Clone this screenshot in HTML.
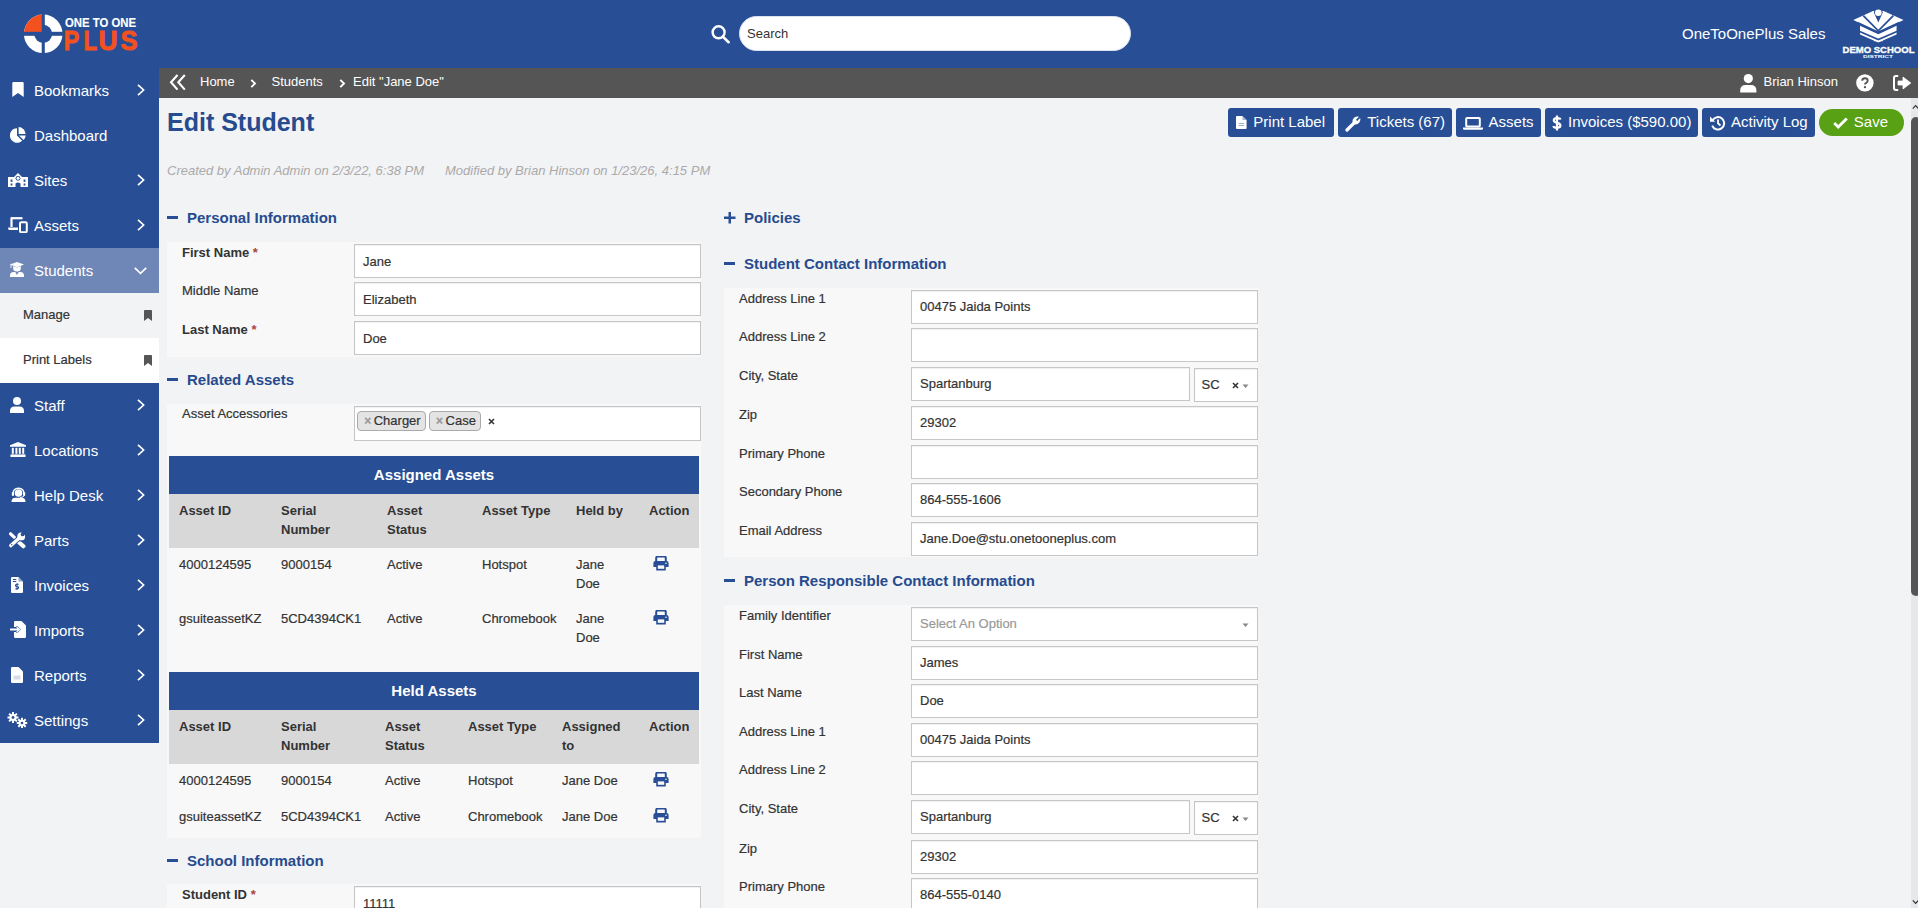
<!DOCTYPE html>
<html><head><meta charset="utf-8">
<style>
*{box-sizing:border-box}
html,body{margin:0;padding:0;width:1918px;height:908px;overflow:hidden}
body{font-family:"Liberation Sans",sans-serif;font-size:13px;color:#333;background:#f2f3f5;position:relative}
.abs{position:absolute}
#hdr{left:0;top:0;width:1918px;height:68px;background:#284f96}
#side{left:0;top:68px;width:159px;height:675px;background:#284f96}
#crumb{left:159px;top:68px;width:1759px;height:30px;background:#555555;color:#fff}
.si{position:absolute;left:0;width:159px;height:45px;color:#fff;font-size:15px}
.si .t{position:absolute;left:34px;top:0;line-height:45px}
.si svg.ic{position:absolute}
.si .chev{position:absolute;left:136px;top:15.5px}
.sub{position:absolute;left:0;width:159px;height:45px;font-size:13px;color:#333}
.sub .t{position:absolute;left:23px;line-height:45px;top:-1px}
.sub svg{position:absolute;left:144px;top:17px}
.btn{position:absolute;top:108px;height:29px;background:#284f96;color:#fff;border-radius:3px;font-size:15px;line-height:29px;white-space:nowrap}
.btn svg{position:absolute}
.btn span{position:absolute;top:-1px}
.sh{position:absolute;font-size:15px;font-weight:bold;color:#264b8e;line-height:17px;white-space:nowrap}
.sh .d{position:absolute;left:0;top:7px;width:11.4px;height:2.8px;background:#284f96}
.sh .tx{position:absolute;left:20px;top:0}
.panel{position:absolute;background:#f8f8f9;width:534px}
.row{position:absolute;left:0;width:534px;height:34px}
.row .lb{position:absolute;left:15px;top:1px;line-height:15px;white-space:nowrap}
.row .lb b{font-weight:bold}
.row .lb .req{color:#a94442;font-weight:bold}
.inp{position:absolute;left:187px;top:0;width:347px;height:34px;background:#fff;border:1px solid #c6c6c6;box-shadow:inset 0 1px 1px rgba(0,0,0,.06)}
.inp .v{position:absolute;left:8px;top:9px;line-height:15px;white-space:nowrap;color:#333}
table.at{position:absolute;border-collapse:collapse;table-layout:fixed;font-size:13px}
table.at th.cap{background:#284f96;color:#fff;font-size:15px;height:38px;text-align:center;font-weight:bold;padding:0}
table.at thead tr.h th{background:#d8d8d8;font-weight:bold;text-align:left;vertical-align:top;padding:8px 10px;line-height:18.57px;color:#333;border-bottom:1px solid #d8d8d8}
table.at td{vertical-align:top;padding:8px 10px;line-height:18.57px;color:#333;border-bottom:1px solid #f8f8f9}
.chip{position:absolute;top:3.6px;height:20px;line-height:18px;padding:0 4px 0 6px;background:#e4e4e4;border:1px solid #aaa;border-radius:4px;font-size:13px;color:#333;white-space:nowrap}
.chip i{font-style:normal;color:#999;font-size:12px;font-weight:bold;margin-right:2.5px}
.pr .inp .v{top:8px}
body{-webkit-text-stroke:0.2px currentColor}
b,th,.sh,.req,.abs[style*="font-weight:bold"],.si,#crumb,.btn,#hdr{-webkit-text-stroke:0}
</style></head><body>

<div id="hdr" class="abs">
<svg class="abs" style="left:0;top:0" width="160" height="68" viewBox="0 0 160 68">
  <defs><mask id="lm"><rect x="0" y="0" width="160" height="68" fill="#fff"/><rect x="41.7" y="0" width="3.1" height="68" fill="#000"/><rect x="0" y="31.8" width="80" height="4" fill="#000"/></mask></defs>
 <g mask="url(#lm)">
  <circle cx="43.2" cy="33.8" r="19.3" fill="#fff"/>
  <circle cx="43.2" cy="33.8" r="9" fill="#284f96"/>
  <path d="M43.2 33.8 L23.9 33.8 A19.3 19.3 0 0 1 43.2 14.5 Z" fill="#f4511e"/>
 </g>
<text x="65" y="27.2" font-family="Liberation Sans" font-weight="bold" font-size="12.6" fill="#fff" stroke="#fff" stroke-width="0.15" textLength="71" lengthAdjust="spacingAndGlyphs">ONE TO ONE</text>
 <g font-family="Liberation Sans" font-weight="bold" font-size="27" fill="#f4511e" stroke="#f4511e" stroke-width="0.9"><text x="63.8" y="50" textLength="15.5" lengthAdjust="spacingAndGlyphs">P</text><text x="83.6" y="50" textLength="13.5" lengthAdjust="spacingAndGlyphs">L</text><text x="98.6" y="50" textLength="19" lengthAdjust="spacingAndGlyphs">U</text><text x="120.6" y="50" textLength="17" lengthAdjust="spacingAndGlyphs">S</text></g>
</svg>
<svg class="abs" style="left:710px;top:24px" width="22" height="20" viewBox="0 0 22 20">
 <circle cx="8.6" cy="8.3" r="6" fill="none" stroke="#fff" stroke-width="2.4"/>
 <line x1="12.8" y1="12.6" x2="18.6" y2="18.2" stroke="#fff" stroke-width="2.6" stroke-linecap="round"/>
</svg>
<div class="abs" style="left:739px;top:16px;width:392px;height:35px;background:#fff;border-radius:17.5px;border:1px solid #dde3ee"></div>
<div class="abs" style="left:747px;top:26px;line-height:15px;font-size:13px;color:#333">Search</div>
<div class="abs" style="left:1682px;top:25px;line-height:17px;font-size:15px;color:#fff;white-space:nowrap">OneToOnePlus Sales</div>
<svg class="abs" style="left:1848px;top:4px" width="62" height="42" viewBox="0 0 1340 908">
 <g fill="#fff">
  <path d="M115 345 L540 150 L770 150 L1200 345 L655 610 Z"/>
  <path d="M260 470 L655 655 L1050 470 L1050 660 L655 830 L260 660 Z"/>
  <rect x="560" y="770" width="190" height="35"/>
 </g>
 <g fill="none" stroke="#284f96" stroke-width="38">
  <path d="M330 250 L655 580 L980 250"/>
  <path d="M200 400 L655 610 L1110 400"/>
  <path d="M240 590 L655 770 L1070 590"/>
 </g>
 <path d="M560 190 A95 95 0 1 1 750 190 L655 400 Z" fill="#284f96"/>
 <circle cx="655" cy="190" r="72" fill="#fff"/>
</svg>
<svg class="abs" style="left:1838px;top:4px" width="80" height="58" viewBox="0 0 80 58">
 <text x="4.5" y="49.3" font-family="Liberation Sans" font-weight="bold" font-size="8.6" fill="#fff" stroke="#fff" stroke-width="0.3" textLength="72" lengthAdjust="spacingAndGlyphs">DEMO SCHOOL</text>
 <text x="25" y="53.6" font-family="Liberation Sans" font-weight="bold" font-size="4.2" fill="#fff" textLength="30" lengthAdjust="spacingAndGlyphs">DISTRICT</text>
</svg>
</div>
<div id="side" class="abs">
<div class="si" style="top:0px;"><svg class="ic" style="left:11.5px;top:14px" width="12" height="15" viewBox="0 0 12 15"><path d="M0.3 1.2 Q0.3 0 1.5 0 L10.5 0 Q11.7 0 11.7 1.2 L11.7 15 L6 11 L0.3 15 Z" fill="#fff"/></svg><span class="t">Bookmarks</span><svg class="chev" width="10" height="12" viewBox="0 0 10 12"><path d="M2 0.8 L7.6 6 L2 11.2" fill="none" stroke="#fff" stroke-width="1.7"/></svg></div>
<div class="si" style="top:45px;"><svg class="ic" style="left:10px;top:13.5px" width="16" height="16" viewBox="0 0 16 16"><path d="M7 1.2 L7 8.6 L12.2 13.8 A7.3 7.3 0 1 1 7 1.2 Z" fill="#fff"/><path d="M8.6 0 A7.3 7.3 0 0 1 15.6 7 L8.6 7 Z" fill="#fff"/><path d="M9 8.6 L15.8 8.6 A7.3 7.3 0 0 1 13.6 12.9 Z" fill="#fff"/></svg><span class="t">Dashboard</span></div>
<div class="si" style="top:90px;"><svg class="ic" style="left:8px;top:14px" width="20" height="16" viewBox="0 0 20 16"><path d="M0 5 L6 5 L10 1 L14 5 L20 5 L20 15 L12.5 15 L12.5 11.5 Q10 9.5 7.5 11.5 L7.5 15 L0 15 Z" fill="#fff"/><circle cx="10" cy="6.3" r="2.4" fill="#284f96"/><circle cx="10" cy="6.3" r="1.5" fill="#fff"/><rect x="2.6" y="7.5" width="1.8" height="2.4" fill="#284f96"/><rect x="15.6" y="7.5" width="1.8" height="2.4" fill="#284f96"/><rect x="2.6" y="11.5" width="1.8" height="2" fill="#284f96"/><rect x="15.6" y="11.5" width="1.8" height="2" fill="#284f96"/></svg><span class="t">Sites</span><svg class="chev" width="10" height="12" viewBox="0 0 10 12"><path d="M2 0.8 L7.6 6 L2 11.2" fill="none" stroke="#fff" stroke-width="1.7"/></svg></div>
<div class="si" style="top:135px;"><svg class="ic" style="left:8px;top:14px" width="20" height="16" viewBox="0 0 20 16"><path d="M3 1.2 L14.5 1.2" stroke="#fff" stroke-width="2.2" fill="none"/><path d="M3.5 0.5 L3.5 10" stroke="#fff" stroke-width="2.2"/><path d="M0.2 10.5 L10 10.5 L10 13 L1.5 13 Q0.2 13 0.2 11.7 Z" fill="#fff"/><rect x="12" y="5.2" width="6.8" height="10" rx="1.2" fill="none" stroke="#fff" stroke-width="2"/></svg><span class="t">Assets</span><svg class="chev" width="10" height="12" viewBox="0 0 10 12"><path d="M2 0.8 L7.6 6 L2 11.2" fill="none" stroke="#fff" stroke-width="1.7"/></svg></div>
<div class="si" style="top:180px;background:#6f87b7"><svg class="ic" style="left:10.4px;top:14px" width="14" height="15" viewBox="0 0 14 15"><path d="M7 0 L14 2.6 L7 5.2 L0 2.6 Z" fill="#fff"/><path d="M3.2 4 L3.2 6.2 Q3.2 9.4 7 9.4 Q10.8 9.4 10.8 6.2 L10.8 4 L7 5.5 Z" fill="#fff"/><path d="M1 1.8 L1 6" stroke="#fff" stroke-width="0.9"/><path d="M0 15 L0 13.6 Q0 10 3.6 10 L5.2 10 L7 13 L8.8 10 L10.4 10 Q14 10 14 13.6 L14 15 Z" fill="#fff"/></svg><span class="t">Students</span><svg class="chev" style="left:133.5px;top:17.5px" width="13" height="9" viewBox="0 0 13 9"><path d="M0.8 1.8 L6.5 7.4 L12.2 1.8" fill="none" stroke="#fff" stroke-width="1.7"/></svg></div>
<div class="sub" style="top:225px;background:#f2f3f5"><span class="t">Manage</span><svg width="8" height="11" viewBox="0 0 8 11"><path d="M0 0.8 Q0 0 0.8 0 L7.2 0 Q8 0 8 0.8 L8 11 L4 8 L0 11 Z" fill="#555"/></svg></div>
<div class="sub" style="top:270px;background:#fff"><span class="t">Print Labels</span><svg width="8" height="11" viewBox="0 0 8 11"><path d="M0 0.8 Q0 0 0.8 0 L7.2 0 Q8 0 8 0.8 L8 11 L4 8 L0 11 Z" fill="#555"/></svg></div>
<div class="si" style="top:315px;"><svg class="ic" style="left:10.4px;top:13.5px" width="14" height="16" viewBox="0 0 14 16"><circle cx="7" cy="4" r="4" fill="#fff"/><path d="M0 16 L0 14 Q0 9.5 4.5 9.5 L9.5 9.5 Q14 9.5 14 14 L14 16 Z" fill="#fff"/></svg><span class="t">Staff</span><svg class="chev" width="10" height="12" viewBox="0 0 10 12"><path d="M2 0.8 L7.6 6 L2 11.2" fill="none" stroke="#fff" stroke-width="1.7"/></svg></div>
<div class="si" style="top:360px;"><svg class="ic" style="left:9.7px;top:14px" width="16" height="15" viewBox="0 0 16 15"><path d="M8 0 L16 3.2 L16 4.8 L0 4.8 L0 3.2 Z" fill="#fff"/><rect x="1.8" y="5.8" width="2" height="6" fill="#fff"/><rect x="5.4" y="5.8" width="2" height="6" fill="#fff"/><rect x="8.8" y="5.8" width="2" height="6" fill="#fff"/><rect x="12.2" y="5.8" width="2" height="6" fill="#fff"/><rect x="0.5" y="12.4" width="15" height="2.6" fill="#fff"/></svg><span class="t">Locations</span><svg class="chev" width="10" height="12" viewBox="0 0 10 12"><path d="M2 0.8 L7.6 6 L2 11.2" fill="none" stroke="#fff" stroke-width="1.7"/></svg></div>
<div class="si" style="top:405px;"><svg class="ic" style="left:10.6px;top:14px" width="15" height="15" viewBox="0 0 15 15"><path d="M2 7 Q2 1.2 7.5 1.2 Q13 1.2 13 7" fill="none" stroke="#fff" stroke-width="1.4"/><circle cx="7.5" cy="6" r="3.8" fill="#fff"/><rect x="0.8" y="5" width="2.2" height="4" rx="1" fill="#fff"/><rect x="12" y="5" width="2.2" height="4" rx="1" fill="#fff"/><path d="M13 8.5 Q13 10.5 9 10.5" stroke="#fff" stroke-width="1" fill="none"/><path d="M0.5 15 Q0.5 10.8 4.5 10.8 L10.5 10.8 Q14.5 10.8 14.5 15 Z" fill="#fff"/></svg><span class="t">Help Desk</span><svg class="chev" width="10" height="12" viewBox="0 0 10 12"><path d="M2 0.8 L7.6 6 L2 11.2" fill="none" stroke="#fff" stroke-width="1.7"/></svg></div>
<div class="si" style="top:450px;"><svg class="ic" style="left:9.4px;top:13.5px" width="17" height="17" viewBox="0 0 17 17"><path d="M1.6 1.8 L6.4 6.4" stroke="#fff" stroke-width="3.2" stroke-linecap="round"/><path d="M8.8 9.2 L14.4 14.2" stroke="#fff" stroke-width="4.2" stroke-linecap="round"/><path d="M1.9 13.6 L10.8 5.4" stroke="#284f96" stroke-width="5.2" stroke-linecap="round"/><circle cx="12.2" cy="4.2" r="5.2" fill="#284f96"/><path d="M1.9 13.6 L10.8 5.4" stroke="#fff" stroke-width="3.4" stroke-linecap="round"/><circle cx="12.2" cy="4.4" r="3.9" fill="#fff"/><circle cx="13.6" cy="2.4" r="1.9" fill="#284f96"/><path d="M12.2 0 L17 0 L17 4 Z" fill="#284f96"/><circle cx="2.8" cy="12.8" r="0.7" fill="#284f96"/></svg><span class="t">Parts</span><svg class="chev" width="10" height="12" viewBox="0 0 10 12"><path d="M2 0.8 L7.6 6 L2 11.2" fill="none" stroke="#fff" stroke-width="1.7"/></svg></div>
<div class="si" style="top:495px;"><svg class="ic" style="left:11.4px;top:13.5px" width="12" height="16" viewBox="0 0 12 16"><path d="M0 1.2 Q0 0 1.2 0 L7.5 0 L12 4.5 L12 14.8 Q12 16 10.8 16 L1.2 16 Q0 16 0 14.8 Z" fill="#fff"/><path d="M7.5 0 L7.5 4.5 L12 4.5" fill="#284f96" opacity="0.5"/><rect x="1.8" y="2" width="3.5" height="1" fill="#284f96"/><rect x="1.8" y="4" width="3.5" height="1" fill="#284f96"/><path d="M7.7 7.2 L5.6 7.2 Q4.5 7.2 4.5 8.4 Q4.5 9.5 5.8 9.5 L6.4 9.5 Q7.6 9.5 7.6 10.6 Q7.6 11.8 6.4 11.8 L4.3 11.8 M6 6.2 L6 13" stroke="#284f96" stroke-width="1.1" fill="none"/></svg><span class="t">Invoices</span><svg class="chev" width="10" height="12" viewBox="0 0 10 12"><path d="M2 0.8 L7.6 6 L2 11.2" fill="none" stroke="#fff" stroke-width="1.7"/></svg></div>
<div class="si" style="top:540px;"><svg class="ic" style="left:10px;top:13px" width="16" height="17" viewBox="0 0 16 17"><path d="M4 1.2 Q4 0 5.2 0 L11.5 0 L16 4.5 L16 15.8 Q16 17 14.8 17 L5.2 17 Q4 17 4 15.8 L4 11 L6 11 L6 6 L4 6 Z" fill="#fff"/><path d="M0 8.5 L9 8.5" stroke="#284f96" stroke-width="3.4"/><path d="M0 8.5 L9 8.5" stroke="#fff" stroke-width="1.6"/><path d="M6.5 5.5 L10 8.5 L6.5 11.5" stroke="#284f96" stroke-width="1.5" fill="none"/><path d="M6 5.8 L9.2 8.5 L6 11.2 Z" fill="#284f96"/><path d="M0 8.5 L8 8.5" stroke="#fff" stroke-width="1.6"/><path d="M6.6 6.3 L9.5 8.5 L6.6 10.7" stroke="#fff" stroke-width="1.6" fill="none"/></svg><span class="t">Imports</span><svg class="chev" width="10" height="12" viewBox="0 0 10 12"><path d="M2 0.8 L7.6 6 L2 11.2" fill="none" stroke="#fff" stroke-width="1.7"/></svg></div>
<div class="si" style="top:585px;"><svg class="ic" style="left:11.4px;top:13.5px" width="12" height="16" viewBox="0 0 12 16"><path d="M0 1.2 Q0 0 1.2 0 L7.5 0 L12 4.5 L12 14.8 Q12 16 10.8 16 L1.2 16 Q0 16 0 14.8 Z" fill="#fff"/><rect x="2.5" y="8.5" width="7" height="4" fill="#d5dbe8"/></svg><span class="t">Reports</span><svg class="chev" width="10" height="12" viewBox="0 0 10 12"><path d="M2 0.8 L7.6 6 L2 11.2" fill="none" stroke="#fff" stroke-width="1.7"/></svg></div>
<div class="si" style="top:630px;"><svg class="ic" style="left:7px;top:13.5px" width="21" height="16" viewBox="0 0 21 16"><g fill="#fff"><circle cx="6" cy="5.5" r="3.6"/><rect x="5" y="0" width="2" height="11"/><rect x="0.5" y="4.5" width="11" height="2"/><rect x="5" y="0" width="2" height="11" transform="rotate(45 6 5.5)"/><rect x="5" y="0" width="2" height="11" transform="rotate(-45 6 5.5)"/><circle cx="15" cy="11" r="3.3"/><rect x="14" y="5.8" width="2" height="10.4"/><rect x="9.8" y="10" width="10.4" height="2"/><rect x="14" y="5.8" width="2" height="10.4" transform="rotate(45 15 11)"/><rect x="14" y="5.8" width="2" height="10.4" transform="rotate(-45 15 11)"/></g><circle cx="6" cy="5.5" r="1.4" fill="#284f96"/><circle cx="15" cy="11" r="1.3" fill="#284f96"/></svg><span class="t">Settings</span><svg class="chev" width="10" height="12" viewBox="0 0 10 12"><path d="M2 0.8 L7.6 6 L2 11.2" fill="none" stroke="#fff" stroke-width="1.7"/></svg></div>
</div>
<div id="crumb" class="abs">
<svg class="abs" style="left:10px;top:6px" width="18" height="17" viewBox="0 0 18 17"><path d="M8.5 1 L2 8.3 L8.5 15.6 M15.8 1 L9.3 8.3 L15.8 15.6" fill="none" stroke="#fff" stroke-width="2.1"/></svg>
<span class="abs" style="left:41px;top:6px;line-height:15px;font-size:13px">Home</span>
<svg class="abs" style="left:90.5px;top:10.5px" width="7" height="9" viewBox="0 0 7 9"><path d="M1.3 0.8 L5 4.5 L1.3 8.2" fill="none" stroke="#fff" stroke-width="1.9"/></svg>
<span class="abs" style="left:112.5px;top:6px;line-height:15px;font-size:13px">Students</span>
<svg class="abs" style="left:179.5px;top:10.5px" width="7" height="9" viewBox="0 0 7 9"><path d="M1.3 0.8 L5 4.5 L1.3 8.2" fill="none" stroke="#fff" stroke-width="1.9"/></svg>
<span class="abs" style="left:194px;top:6px;line-height:15px;font-size:13px">Edit "Jane Doe"</span>
<svg class="abs" style="left:1581px;top:5.5px" width="17" height="19" viewBox="0 0 17 19"><circle cx="8.3" cy="4.6" r="4.6" fill="#fff"/><path d="M0.2 18.5 L0.2 16.5 Q0.2 11 5.7 11 L10.9 11 Q16.4 11 16.4 16.5 L16.4 18.5 Z" fill="#fff"/></svg>
<span class="abs" style="left:1604.5px;top:6px;line-height:15px;font-size:13px;white-space:nowrap">Brian Hinson</span>
<svg class="abs" style="left:1696.5px;top:6px" width="18" height="18" viewBox="0 0 18 18"><circle cx="8.9" cy="8.9" r="8.7" fill="#fff"/><path d="M6.2 6.8 Q6.2 4.2 8.9 4.2 Q11.7 4.2 11.7 6.6 Q11.7 8 10.2 8.8 Q9 9.4 9 10.6" fill="none" stroke="#555" stroke-width="1.9"/><circle cx="9" cy="13.2" r="1.15" fill="#555"/></svg>
<svg class="abs" style="left:1733.5px;top:7px" width="19" height="16" viewBox="0 0 19 16"><path d="M5.2 1 L3 1 Q1 1 1 3 L1 13 Q1 15 3 15 L5.2 15" fill="none" stroke="#fff" stroke-width="2"/><path d="M5 6 L10 6 L10 2 L17.8 8 L10 14 L10 10 L5 10 Z" fill="#fff" stroke="#fff" stroke-width="0.8" stroke-linejoin="round"/></svg>
</div>

<div class="abs" style="left:167px;top:107.3px;font-size:25px;font-weight:bold;color:#264b8e;line-height:30px;white-space:nowrap">Edit Student</div>
<div class="btn" style="left:1228px;width:106px"><svg style="left:8px;top:8.3px" width="11" height="13" viewBox="0 0 11 13"><path d="M0 1 Q0 0 1 0 L6.5 0 L10.6 4.1 L10.6 12 Q10.6 13 9.6 13 L1 13 Q0 13 0 12 Z" fill="#fff"/><path d="M6.5 0 L6.5 4.1 L10.6 4.1" fill="#284f96" opacity=".4"/><rect x="2.5" y="7" width="5.6" height="1" fill="#284f96" opacity=".45"/><rect x="2.5" y="9" width="5.6" height="1" fill="#284f96" opacity=".45"/></svg><span style="left:25.3px">Print Label</span></div>
<div class="btn" style="left:1338px;width:114px"><svg style="left:7px;top:7.5px" width="16" height="16" viewBox="0 0 16 16"><path d="M2 14 L8.6 7.4" stroke="#fff" stroke-width="3.2" stroke-linecap="round"/><path d="M8 8 Q6.5 4 9.4 1.6 Q11.5 0 14 0.8 L11 3.8 L12.2 5 L15.2 2 Q16 4.5 14.4 6.6 Q12 9.5 8 8 Z" fill="#fff"/></svg><span style="left:29.2px">Tickets (67)</span></div>
<div class="btn" style="left:1456px;width:85px"><svg style="left:7px;top:8.5px" width="20" height="13" viewBox="0 0 20 13"><rect x="3.2" y="1" width="13.6" height="8.6" rx="0.8" fill="none" stroke="#fff" stroke-width="2"/><path d="M0 10.6 L20 10.6 L20 11.6 Q20 12.8 18.8 12.8 L1.2 12.8 Q0 12.8 0 11.6 Z" fill="#fff"/></svg><span style="left:32.6px">Assets</span></div>
<div class="btn" style="left:1545px;width:153px"><svg style="left:6.5px;top:7px" width="10" height="16" viewBox="0 0 10 16"><path d="M8.3 4.6 Q8.2 3.2 5 3.2 Q1.8 3.2 1.8 5.3 Q1.8 7.2 5 7.8 Q8.4 8.4 8.4 10.6 Q8.4 12.8 5 12.8 Q1.6 12.8 1.5 11" fill="none" stroke="#fff" stroke-width="2.2"/><path d="M5 0.5 L5 15.5" stroke="#fff" stroke-width="2.2"/></svg><span style="left:23px">Invoices ($590.00)</span></div>
<div class="btn" style="left:1702px;width:113px"><svg style="left:6.5px;top:7px" width="17" height="16" viewBox="0 0 17 16"><path d="M3.6 5.2 A6.2 6.2 0 1 1 3.2 10.6" fill="none" stroke="#fff" stroke-width="2"/><path d="M1 1.6 L1 6.8 L6.2 6.8 Z" fill="#fff"/><path d="M9 4.5 L9 8.3 L11.5 10.5" fill="none" stroke="#fff" stroke-width="1.8"/></svg><span style="left:29px">Activity Log</span></div>
<div class="btn" style="left:1819px;top:109px;width:85px;height:27px;border-radius:13.5px;background:#58a014"><svg style="left:13.5px;top:7.5px" width="15" height="12" viewBox="0 0 15 12"><path d="M1.2 6 L5.2 10 L13.8 1.4" fill="none" stroke="#fff" stroke-width="2.8"/></svg><span style="left:34.8px;top:-2px">Save</span></div>

<div class="abs" style="left:167px;top:163px;font-size:13px;font-style:italic;color:#aaaaaa;line-height:15px;white-space:nowrap;-webkit-text-stroke:0">Created by Admin Admin on 2/3/22, 6:38 PM</div>
<div class="abs" style="left:445px;top:163px;font-size:13px;font-style:italic;color:#aaaaaa;line-height:15px;white-space:nowrap;-webkit-text-stroke:0">Modified by Brian Hinson on 1/23/26, 4:15 PM</div>

<!--FORM-->
<div class="sh" style="left:167px;top:209.3px"><span class="d"></span><span class="tx">Personal Information</span></div>
<div class="panel" style="left:167px;top:242px;height:115px">
<div class="row" style="top:2.00px"><span class="lb"><b>First Name</b> <span class="req">*</span></span><div class="inp" style=""><span class="v" style="color:#333">Jane</span></div></div>
<div class="row" style="top:40.00px"><span class="lb">Middle Name</span><div class="inp" style=""><span class="v" style="color:#333">Elizabeth</span></div></div>
<div class="row" style="top:79.00px"><span class="lb"><b>Last Name</b> <span class="req">*</span></span><div class="inp" style=""><span class="v" style="color:#333">Doe</span></div></div>
</div>
<div class="sh" style="left:167px;top:371px"><span class="d"></span><span class="tx">Related Assets</span></div>
<div class="panel" style="left:167px;top:403.6px;height:434px">
<div class="row" style="top:2.7px"><span class="lb" style="top:-0.5px">Asset Accessories</span><div class="inp" style="height:34.3px"><span class="chip" style="left:2.2px"><i>×</i>Charger</span><span class="chip" style="left:74.1px"><i>×</i>Case</span><svg style="position:absolute;left:132.5px;top:10.5px" width="8" height="8" viewBox="0 0 8 8"><path d="M1 1 L6 6 M6 1 L1 6" stroke="#333" stroke-width="1.6"/></svg></div></div>
<table class="at" style="left:2px;top:52.4px;width:530px"><colgroup><col style="width:102px"><col style="width:106px"><col style="width:95px"><col style="width:94px"><col style="width:73px"><col style="width:60px"></colgroup><thead><tr><th class="cap" colspan="6">Assigned Assets</th></tr><tr class="h"><th>Asset ID</th><th>Serial Number</th><th>Asset Status</th><th>Asset Type</th><th>Held by</th><th>Action</th></tr></thead><tbody><tr><td>4000124595</td><td>9000154</td><td>Active</td><td>Hotspot</td><td>Jane Doe</td><td style="padding-top:8px;padding-left:14px"><svg style="display:block" width="16" height="15" viewBox="0 0 16 15"><path d="M3.2 5 L3.2 2 Q3.2 0.6 4.6 0.6 L11.4 0.6 Q12.8 0.6 12.8 2 L12.8 5" fill="none" stroke="#284f96" stroke-width="2"/><path d="M0.4 7 Q0.4 5 2.4 5 L13.6 5 Q15.6 5 15.6 7 L15.6 11 L12.8 11 L12.8 14.4 L3.2 14.4 L3.2 11 L0.4 11 Z" fill="#284f96"/><rect x="4.8" y="9.4" width="6.4" height="3.4" fill="#f8f8f9"/><circle cx="13" cy="7.3" r="0.8" fill="#f8f8f9"/></svg></td></tr><tr><td>gsuiteassetKZ</td><td>5CD4394CK1</td><td>Active</td><td>Chromebook</td><td>Jane Doe</td><td style="padding-top:8px;padding-left:14px"><svg style="display:block" width="16" height="15" viewBox="0 0 16 15"><path d="M3.2 5 L3.2 2 Q3.2 0.6 4.6 0.6 L11.4 0.6 Q12.8 0.6 12.8 2 L12.8 5" fill="none" stroke="#284f96" stroke-width="2"/><path d="M0.4 7 Q0.4 5 2.4 5 L13.6 5 Q15.6 5 15.6 7 L15.6 11 L12.8 11 L12.8 14.4 L3.2 14.4 L3.2 11 L0.4 11 Z" fill="#284f96"/><rect x="4.8" y="9.4" width="6.4" height="3.4" fill="#f8f8f9"/><circle cx="13" cy="7.3" r="0.8" fill="#f8f8f9"/></svg></td></tr></tbody></table>
<table class="at" style="left:2px;top:268.4px;width:530px"><colgroup><col style="width:102px"><col style="width:104px"><col style="width:83px"><col style="width:94px"><col style="width:87px"><col style="width:60px"></colgroup><thead><tr><th class="cap" colspan="6">Held Assets</th></tr><tr class="h"><th>Asset ID</th><th>Serial Number</th><th>Asset Status</th><th>Asset Type</th><th>Assigned to</th><th>Action</th></tr></thead><tbody><tr><td>4000124595</td><td>9000154</td><td>Active</td><td>Hotspot</td><td>Jane Doe</td><td style="padding-top:8px;padding-left:14px"><svg style="display:block" width="16" height="15" viewBox="0 0 16 15"><path d="M3.2 5 L3.2 2 Q3.2 0.6 4.6 0.6 L11.4 0.6 Q12.8 0.6 12.8 2 L12.8 5" fill="none" stroke="#284f96" stroke-width="2"/><path d="M0.4 7 Q0.4 5 2.4 5 L13.6 5 Q15.6 5 15.6 7 L15.6 11 L12.8 11 L12.8 14.4 L3.2 14.4 L3.2 11 L0.4 11 Z" fill="#284f96"/><rect x="4.8" y="9.4" width="6.4" height="3.4" fill="#f8f8f9"/><circle cx="13" cy="7.3" r="0.8" fill="#f8f8f9"/></svg></td></tr><tr><td>gsuiteassetKZ</td><td>5CD4394CK1</td><td>Active</td><td>Chromebook</td><td>Jane Doe</td><td style="padding-top:8px;padding-left:14px"><svg style="display:block" width="16" height="15" viewBox="0 0 16 15"><path d="M3.2 5 L3.2 2 Q3.2 0.6 4.6 0.6 L11.4 0.6 Q12.8 0.6 12.8 2 L12.8 5" fill="none" stroke="#284f96" stroke-width="2"/><path d="M0.4 7 Q0.4 5 2.4 5 L13.6 5 Q15.6 5 15.6 7 L15.6 11 L12.8 11 L12.8 14.4 L3.2 14.4 L3.2 11 L0.4 11 Z" fill="#284f96"/><rect x="4.8" y="9.4" width="6.4" height="3.4" fill="#f8f8f9"/><circle cx="13" cy="7.3" r="0.8" fill="#f8f8f9"/></svg></td></tr></tbody></table>
</div>
<div class="sh" style="left:167px;top:852.3px"><span class="d"></span><span class="tx">School Information</span></div>
<div class="panel" style="left:167px;top:883.5px;height:40px">
<div class="row" style="top:2.50px"><span class="lb"><b>Student ID</b> <span class="req">*</span></span><div class="inp" style=""><span class="v" style="color:#333">11111</span></div></div>
</div>
<div class="sh" style="left:724px;top:208.8px"><svg style="position:absolute;left:0;top:3.3px" width="11.5" height="11.5" viewBox="0 0 11.5 11.5"><path d="M5.75 0 L5.75 11.5 M0 5.75 L11.5 5.75" stroke="#284f96" stroke-width="2.5"/></svg><span class="tx">Policies</span></div>
<div class="sh" style="left:724px;top:255.2px"><span class="d"></span><span class="tx">Student Contact Information</span></div>
<div class="panel pr" style="left:724px;top:288px;height:269px">
<div class="row" style="top:2.00px"><span class="lb">Address Line 1</span><div class="inp" style=""><span class="v" style="color:#333">00475 Jaida Points</span></div></div>
<div class="row" style="top:40.00px"><span class="lb">Address Line 2</span><div class="inp" style=""></div></div>
<div class="row" style="top:79.00px"><span class="lb">City, State</span><div class="inp" style="width:279px"><span class="v">Spartanburg</span></div><div class="inp" style="left:469.5px;width:64.5px;top:1px"><span class="v" style="left:7px">SC</span><svg style="position:absolute;left:37.5px;top:12.5px" width="8" height="8" viewBox="0 0 8 8"><path d="M1 1 L6 6 M6 1 L1 6" stroke="#333" stroke-width="1.6"/></svg><svg style="position:absolute;left:47.5px;top:14.5px" width="7" height="5" viewBox="0 0 7 5"><path d="M0.5 0.5 L6.5 0.5 L3.5 4 Z" fill="#888"/></svg></div></div>
<div class="row" style="top:118.00px"><span class="lb">Zip</span><div class="inp" style=""><span class="v" style="color:#333">29302</span></div></div>
<div class="row" style="top:157.00px"><span class="lb">Primary Phone</span><div class="inp" style=""></div></div>
<div class="row" style="top:195.00px"><span class="lb">Secondary Phone</span><div class="inp" style=""><span class="v" style="color:#333">864-555-1606</span></div></div>
<div class="row" style="top:234.00px"><span class="lb">Email Address</span><div class="inp" style=""><span class="v" style="color:#333">Jane.Doe@stu.onetooneplus.com</span></div></div>
</div>
<div class="sh" style="left:724px;top:572.3px"><span class="d"></span><span class="tx">Person Responsible Contact Information</span></div>
<div class="panel pr" style="left:724px;top:605px;height:310px">
<div class="row" style="top:2.00px"><span class="lb">Family Identifier</span><div class="inp"><span class="v" style="color:#999">Select An Option</span><svg style="position:absolute;left:330px;top:15px" width="7" height="5" viewBox="0 0 7 5"><path d="M0.5 0.5 L6.5 0.5 L3.5 4 Z" fill="#888"/></svg></div></div>
<div class="row" style="top:41.00px"><span class="lb">First Name</span><div class="inp" style=""><span class="v" style="color:#333">James</span></div></div>
<div class="row" style="top:79.00px"><span class="lb">Last Name</span><div class="inp" style=""><span class="v" style="color:#333">Doe</span></div></div>
<div class="row" style="top:118.00px"><span class="lb">Address Line 1</span><div class="inp" style=""><span class="v" style="color:#333">00475 Jaida Points</span></div></div>
<div class="row" style="top:156.00px"><span class="lb">Address Line 2</span><div class="inp" style=""></div></div>
<div class="row" style="top:195.00px"><span class="lb">City, State</span><div class="inp" style="width:279px"><span class="v">Spartanburg</span></div><div class="inp" style="left:469.5px;width:64.5px;top:1px"><span class="v" style="left:7px">SC</span><svg style="position:absolute;left:37.5px;top:12.5px" width="8" height="8" viewBox="0 0 8 8"><path d="M1 1 L6 6 M6 1 L1 6" stroke="#333" stroke-width="1.6"/></svg><svg style="position:absolute;left:47.5px;top:14.5px" width="7" height="5" viewBox="0 0 7 5"><path d="M0.5 0.5 L6.5 0.5 L3.5 4 Z" fill="#888"/></svg></div></div>
<div class="row" style="top:235.00px"><span class="lb">Zip</span><div class="inp" style=""><span class="v" style="color:#333">29302</span></div></div>
<div class="row" style="top:273.00px"><span class="lb">Primary Phone</span><div class="inp" style=""><span class="v" style="color:#333">864-555-0140</span></div></div>
</div>
<!--/FORM-->
<div class="abs" style="left:1911px;top:98px;width:7px;height:810px;background:#e6e7eb"></div>
<div class="abs" style="left:1911px;top:117px;width:10px;height:478.5px;background:#555;border-radius:5px"></div>
<svg class="abs" style="left:1912px;top:104px" width="6" height="6" viewBox="0 0 6 6"><path d="M0.8 4.6 L3.6 1.6 L6.4 4.6" fill="none" stroke="#333" stroke-width="1.2"/></svg>
<svg class="abs" style="left:1912px;top:899px" width="6" height="6" viewBox="0 0 6 6"><path d="M0.8 1.4 L3.6 4.4 L6.4 1.4" fill="none" stroke="#333" stroke-width="1.2"/></svg>
</body></html>
